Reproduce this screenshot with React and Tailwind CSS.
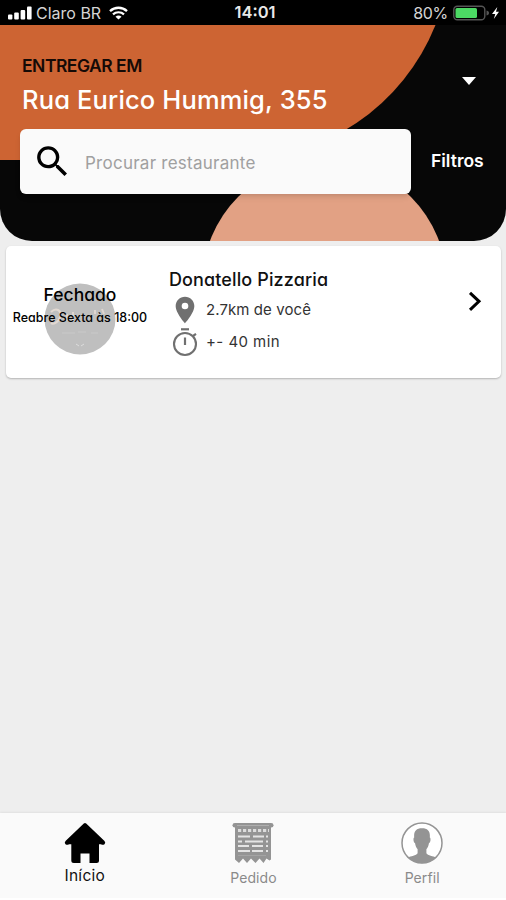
import React, { useState } from "react";
import { MdSearch, MdLocationOn } from "react-icons/md";

const StatusBar = () => (
  <div className="relative flex h-[25px] shrink-0 items-center justify-between bg-black pl-2 pr-1.5 text-[16px] text-[#d4d4d4] font-['Inter',sans-serif]">
    <div className="flex items-center">
      <svg width="24" height="14" viewBox="0 0 24 14" fill="#fff">
        <rect x="0" y="8.5" width="4.4" height="5" rx="1" />
        <rect x="6.2" y="6.5" width="4.6" height="7" rx="1" />
        <rect x="12.6" y="4" width="4.6" height="9.5" rx="1" />
        <rect x="19" y="0.5" width="4.6" height="13" rx="1" />
      </svg>
      <span className="ml-1 w-[66px] whitespace-nowrap [font-feature-settings:normal]">
        Claro BR
      </span>
      <svg className="ml-[7px]" width="19" height="14" viewBox="0 0 19 14" fill="none">
        <path d="M1 5.2C5.8 0.6 13.2 0.6 18 5.2" stroke="#fff" strokeWidth="2.3" />
        <path d="M4 8.4C7 5.5 12 5.5 15 8.4" stroke="#fff" strokeWidth="2.2" />
        <path d="M9.5 13.6 6.5 10.7C8.2 9.2 10.8 9.2 12.5 10.7Z" fill="#fff" />
      </svg>
    </div>
    <span className="absolute left-1/2 ml-[2px] -translate-x-1/2 text-[16.5px] font-semibold text-[#e8e8e8]">
      14:01
    </span>
    <div className="flex items-center">
      <span className="mr-[5px] tracking-[-0.3px]">80%</span>
      <svg width="47" height="16" viewBox="0 0 47 16" fill="none">
        <rect x="0.8" y="1.2" width="31" height="13.6" rx="3.5" stroke="#555" strokeWidth="1.4" />
        <path d="M33.5 5.5V10.5C35.5 10 36 9 36 8S35.5 6 33.5 5.5Z" fill="#555" />
        <rect x="2.5" y="3" width="21.5" height="10" rx="1.5" fill="#4cd964" />
        <path d="M44.3 2 39 9H42.3L40.8 14L46 6.8H43Z" fill="#fff" />
      </svg>
    </div>
  </div>
);

const Header = ({ search, setSearch }) => (
  <header className="relative isolate flex h-[216px] shrink-0 flex-col overflow-hidden rounded-b-[32px] bg-[#070707]">
    <svg
      className="absolute inset-0 -z-10"
      width="506"
      height="216"
      viewBox="0 0 506 216"
    >
      <path d="M0 0H435.5A215 215 0 0 1 236 135H0Z" fill="#cd6433" />
      <circle cx="324.5" cy="258" r="122" fill="#e2a184" />
    </svg>

    <div className="flex h-[104px] items-start justify-between pl-[22px] pr-[30px] pt-[29px]">
      <div>
        <p className="whitespace-nowrap text-[17.5px] font-semibold leading-6 tracking-[-0.5px] text-[#150a06]">
          ENTREGAR EM
        </p>
        <h1 className="mt-[6px] whitespace-nowrap text-[25.5px] font-medium leading-8 tracking-[0.15px] text-white">
          Rua Eurico Hummig, 355
        </h1>
      </div>
      <svg className="mt-[23px]" width="14" height="8" viewBox="0 0 14 8" fill="#fff">
        <path d="M0 0H14L7 8Z" />
      </svg>
    </div>

    <div className="flex items-center pl-5">
      <label className="flex h-[65px] w-[391px] items-center rounded-md bg-[#fafafa] pl-3 shadow-md">
        <MdSearch className="text-[41px] text-black" />
        <input
          className="ml-3 mt-1 w-[280px] bg-transparent text-[17px] tracking-[0.25px] outline-none [font-feature-settings:normal] placeholder:text-[#a0a0a0]"
          placeholder="Procurar restaurante"
          value={search}
          onChange={(e) => setSearch(e.target.value)}
        />
      </label>
      <button className="ml-5 text-[17.5px] font-semibold text-white">
        Filtros
      </button>
    </div>
  </header>
);

const RestaurantCard = ({ restaurant }) => (
  <div className="ml-1.5 mr-[5px] mt-[5px] flex h-[132px] rounded-[5px] bg-white shadow-[0_1px_2px_rgba(0,0,0,0.25)]">
    <div className="relative flex w-[148px] shrink-0 flex-col items-center pt-[37px] text-black">
      <svg
        className="absolute left-[38px] top-[37px]"
        width="72"
        height="72"
        viewBox="0 0 72 72"
        fill="none"
      >
        <circle cx="36" cy="36" r="35.5" fill="#bfbfbf" />
        <path d="M7 29C12 24 18 27 16 34C15 39 9 42 7 40" stroke="#e2d8d1" strokeWidth="2" />
        <path d="M23 31V38M29 29V37M51 27V31M58 26 60 31" stroke="#dfd6d0" strokeWidth="2" />
        <path d="M18 50H31M34 49H42M47 50H54" stroke="#c9c9c9" />
        <path d="M32 61 35 63M37 63 40 61" stroke="#ddd" />
      </svg>
      <p className="relative text-[17.5px] font-medium leading-6">
        {restaurant.status}
      </p>
      <p className="relative whitespace-nowrap text-[12.5px] font-medium leading-[22px]">
        {restaurant.reopens}
      </p>
    </div>
    <div className="grow pl-[15px] pt-[21px]">
      <h2 className="whitespace-nowrap pt-px text-[18px] font-medium leading-6 tracking-[0.12px] text-[#111]">
        {restaurant.name}
      </h2>
      <div className="mt-[2px] flex h-8 items-center text-[15px] tracking-[0.08px] text-[#333]">
        <MdLocationOn className="text-[32px] text-[#707070]" />
        <span className="ml-[5px] whitespace-nowrap">{restaurant.distance}</span>
      </div>
      <div className="flex h-8 items-center text-[15px] tracking-[0.45px] text-[#333]">
        <svg className="ml-[3px]" width="27" height="30" viewBox="0 0 27 30" fill="none" stroke="#707070">
          <circle cx="13" cy="17" r="11" strokeWidth="2.1" />
          <path d="M9 2.3H17" strokeWidth="2.2" />
          <path d="M13 10.5V18" strokeWidth="2.2" />
          <path d="M21 9 24 6.8" strokeWidth="2.2" />
        </svg>
        <span className="ml-[7px] mt-px whitespace-nowrap">{restaurant.time}</span>
      </div>
    </div>
    <svg className="mr-[19px] mt-[45px] shrink-0" width="14" height="21" viewBox="0 0 14 21" fill="none">
      <path d="M2 1.8 11 10.3 2 18.8" stroke="#000" strokeWidth="3" />
    </svg>
  </div>
);

const HomeIcon = () => (
  <svg width="42" height="42" viewBox="0 0 42 42" fill="#000">
    <path d="M19.8 1.5Q21 0.4 22.2 1.5L40.5 19Q42 20.8 40.5 22.2Q38.8 23.4 37 22.2H35V38.5Q35 41 32.5 41H25.5V31.5H16.5V41H9.8Q7.3 41 7.3 38.5V22.2H5Q3.2 23.4 1.5 22.2Q0 20.8 1.5 19Z" />
  </svg>
);

const OrderIcon = () => (
  <svg className="-ml-0.5" width="42" height="42" viewBox="0 0 42 42">
    <rect x="0.5" y="1" width="41" height="4.6" rx="2.3" fill="#949494" />
    <path d="M3 4H39V37.5L37.5 38.5L34.5 36.5L31.5 41L27.5 36.5L23.5 41L19 36.5L15 41L11 36.5L7 41L3 37.5Z" fill="#949494" />
    <path d="M5 3.5H37" stroke="#b5b5b5" strokeWidth="0.8" />
    <path d="M6 8.5H37" stroke="#dcdcdc" strokeWidth="3" strokeDasharray="3.2 1.8" />
    <path d="M6 14.5H18M21 14.5H32M6 19.5H10M13 19.5H31M6 24H17M20 24H31M6 29H18M20 29H31M34 14.5H36M34 19.5H36M34 24H36M34 29H36" stroke="#e4e4e4" strokeWidth="1.8" />
    <path d="M6 33.5H34" stroke="#aaa" strokeWidth="0.7" />
  </svg>
);

const ProfileIcon = () => (
  <svg width="42" height="42" viewBox="0 0 42 42">
    <circle cx="21" cy="21" r="20" fill="#fff" stroke="#949494" strokeWidth="1.5" />
    <path d="M21 6.3C15 6.3 12.6 9.5 13.2 15.5C12 15.6 12.3 20.5 14 21C14.5 24 15.3 25.8 16.6 27.3V31.2C15.5 33.5 9.5 34 7 35.6A20.3 20.3 0 0 0 35 35.6C32.5 34 26.5 33.5 25.4 31.2V27.3C26.7 25.8 27.5 24 28 21C29.7 20.5 30 15.6 28.8 15.5C29.4 9.5 27 6.3 21 6.3Z" fill="#949494" />
  </svg>
);

const tabs = [
  { label: "Início", icon: HomeIcon },
  { label: "Pedido", icon: OrderIcon },
  { label: "Perfil", icon: ProfileIcon },
];

const App = () => {
  const [search, setSearch] = useState("");
  const [activeTab, setActiveTab] = useState("Início");

  const restaurant = {
    name: "Donatello Pizzaria",
    status: "Fechado",
    reopens: "Reabre Sexta às 18:00",
    distance: "2.7km de você",
    time: "+- 40 min",
  };

  return (
    <div className="flex h-[900px] w-[506px] flex-col overflow-hidden bg-[#eeeeee] font-['Inter',sans-serif] [font-feature-settings:'cv11']">
      <StatusBar />
      <Header search={search} setSearch={setSearch} />

      <main className="grow">
        <RestaurantCard restaurant={restaurant} />
      </main>

      <nav className="flex h-[87px] shrink-0 border-b-2 border-white bg-[#fafafa] shadow-[0_-1px_2px_rgba(0,0,0,0.06)]">
        {tabs.map(({ label, icon: Icon }) => (
          <button
            key={label}
            onClick={() => setActiveTab(label)}
            className="flex flex-1 flex-col items-center pl-px pt-[9px]"
          >
            <Icon />
            {activeTab === label ? (
              <span className="mt-px text-[15.5px] leading-[22px] tracking-[0.3px] text-[#111]">{label}</span>
            ) : (
              <span className="mt-[3px] text-[14px] leading-[22px] tracking-[0.1px] text-[#8a8a8a]">{label}</span>
            )}
          </button>
        ))}
      </nav>
    </div>
  );
};

export default App;
